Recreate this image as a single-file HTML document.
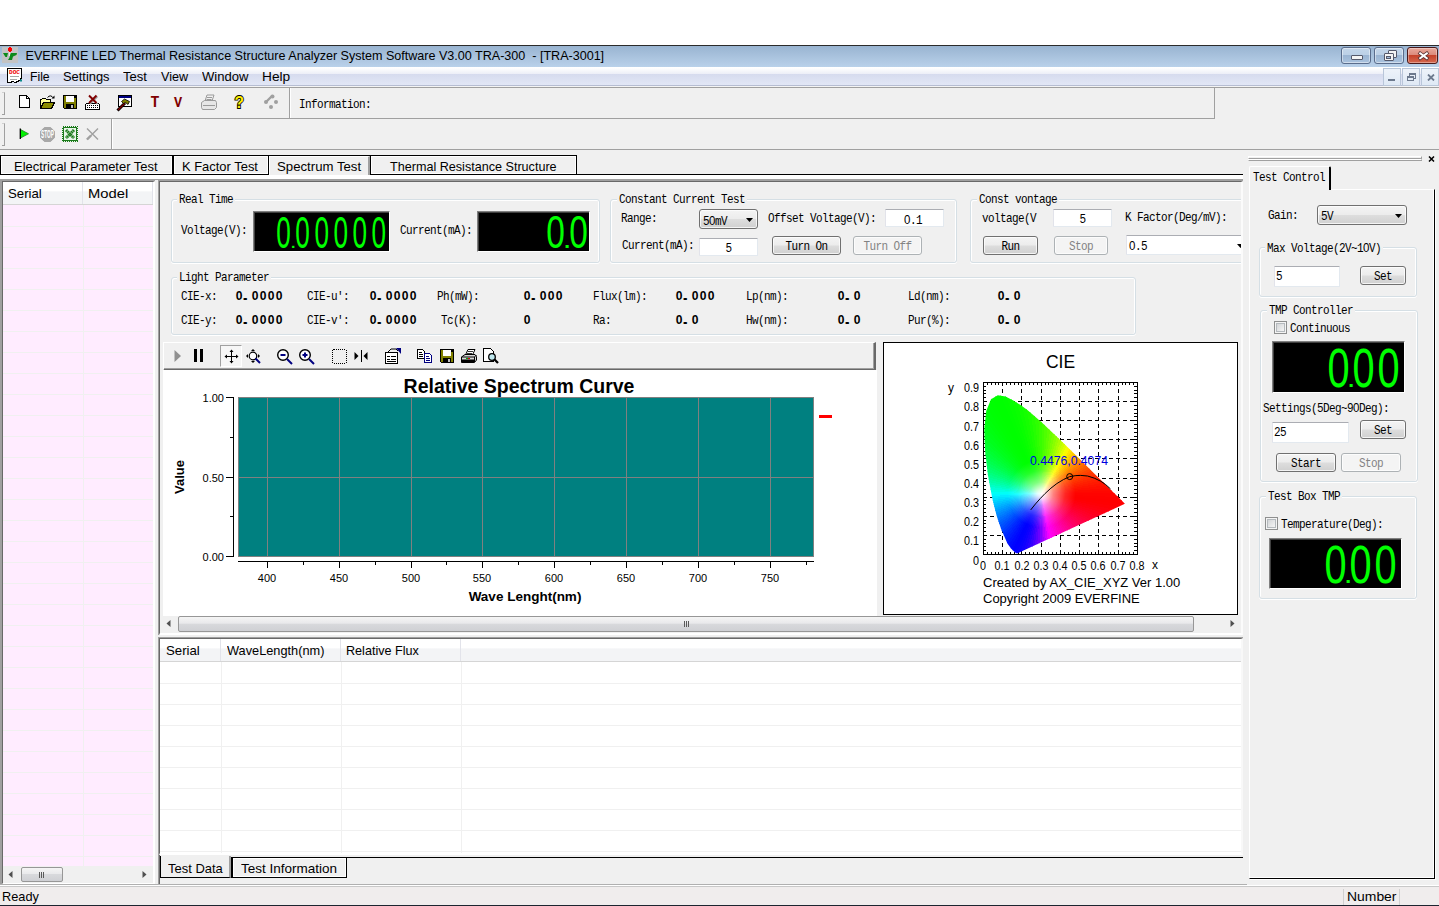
<!DOCTYPE html>
<html lang="en">
<head>
<meta charset="utf-8">
<title>EVERFINE LED Thermal Resistance Structure Analyzer System Software V3.00 TRA-300 - [TRA-3001]</title>
<style>
*{box-sizing:border-box;margin:0;padding:0}
html,body{width:1439px;height:906px;overflow:hidden;background:#fff}
body{position:relative;font-family:"Liberation Sans",sans-serif;font-size:12.6px;color:#000}
div,span,svg,b,i{position:absolute;display:block}
#win{left:0;top:0;width:1439px;height:906px;overflow:hidden}
#bg{left:0;top:45px;width:1439px;height:861px;background:#f0f0f0}
.ui{font-family:"Liberation Sans",sans-serif;font-size:12.6px;white-space:pre;line-height:16px;height:16px}
.ss{font-family:"Liberation Mono",monospace;font-size:11px;letter-spacing:-0.6px;white-space:pre;line-height:14px;height:14px;color:#000;transform:translateY(.5px) scaleY(1.1);transform-origin:0 50%}
.sb{font-family:"Liberation Sans",sans-serif;font-size:13px;white-space:nowrap;line-height:16px;height:16px;font-weight:bold;color:#000}
.sb em{display:inline-block;width:8px;text-align:center;font-style:normal;transform:scaleX(.93)}
.sb em.d{text-align:left;transform:scaleX(1.8);transform-origin:0 50%;margin-left:-1.5px;margin-right:1.5px}
.ar{font-family:"Liberation Sans",sans-serif;white-space:pre;color:#000}
#title{left:0;top:45px;width:1439px;height:22px;border-top:1px solid #2b2b2b;background:linear-gradient(#99b4d1,#b9d1ea)}
#menu{left:0;top:67px;width:1439px;height:20px;background:linear-gradient(#fff 0,#fff 5%,#eceef7 35%,#d6dbee 35%,#e2e7f6 90%,#b6bdd2 90%,#b6bdd2 95%,#f4f4f4 95%)}
.gb{border:1px solid #d5dfe5;border-radius:3px;box-shadow:inset 1px 1px 0 #fff,inset -1px 0 0 #fff,0 1px 0 #fff}
.gl{background:#f0f0f0;padding:0 2px 0 2px}
.btn{border:1px solid #707070;border-radius:3px;background:linear-gradient(#f4f4f4 0,#ececec 48%,#dddddd 52%,#d0d0d0 100%);box-shadow:inset 0 0 0 1px rgba(255,255,255,.75)}
.btn.dis{border-color:#adb2b5;background:#f4f4f4;box-shadow:inset 0 0 0 1px #fcfcfc}
.btn>span{left:0;right:0;text-align:center}
.btn.dis>span{color:#838383}
.ed{background:#fff;border:1px solid #e3e9ef;border-top-color:#abadb3;border-left-color:#e2e3ea;border-radius:1px}
.lcd{background:#000;border:1px solid #808080;border-right-color:#fff;border-bottom-color:#fff;box-shadow:inset 1px 1px 0 #404040}
.seg{font-family:"Liberation Sans",sans-serif;color:#0f0;white-space:nowrap;transform-origin:0 0;line-height:1}
.seg em{display:inline-block;font-style:normal;text-align:center}
.seg u{display:inline-block;width:0;text-decoration:none;position:relative}
.hl{height:1px}
.vl{width:1px}
.tab{border:1px solid #000;background:#f0f0f0;box-shadow:inset 0 0 0 1px #fff}
.tab.sel{box-shadow:none;border:0;border-left:1px solid #fff;border-top:1px solid #fff;border-right:2px solid #a0a0a0;background:#f0f0f0}
.cap{border:1px solid #5a6d8c;border-radius:3px;background:linear-gradient(#c3d6ea 0,#bcd0e6 45%,#9bb5d3 50%,#aac3de 100%);box-shadow:inset 0 0 0 1px rgba(255,255,255,.45)}
.cap.close{border-color:#4a1a1a;background:linear-gradient(#e9a99b 0,#dc8b7c 45%,#c5432b 50%,#d5684f 100%);box-shadow:inset 0 0 0 1px rgba(255,255,255,.35)}
.mdi{width:18px;height:18px;border:1px solid #b9c6d9;background:linear-gradient(#eef3fa,#dfe9f5)}
.cb{width:13px;height:13px;border:1px solid #8e8f8f;background:linear-gradient(135deg,#c9cccf 0,#f4f4f4 80%);box-shadow:inset 0 0 0 1px #f4f4f4,inset 0 0 0 2px #b4b9bd}
.ss em.z{font-family:"Liberation Sans",sans-serif;font-style:normal;display:inline-block;width:6px;text-align:center;letter-spacing:0;font-size:11.5px;line-height:14px}
</style>
</head>
<body>
<div id="win">
<div id="bg"></div>
<!-- title bar -->
<div id="title">
 <svg style="left:2px;top:1px;width:16px;height:16px" viewBox="0 0 16 16" shape-rendering="crispEdges">
  <rect x="0" y="0" width="16" height="16" fill="#c3c3c3"/>
  <rect x="6" y="1" width="4" height="3" fill="#f00"/><rect x="7" y="0" width="2" height="5" fill="#f00"/>
  <polygon points="1,6 6,6 5,10 3.5,10" fill="#0a8a1a" shape-rendering="auto"/>
  <polygon points="9,6 15,6 14.5,8 11,9.5 10,13 6,13 7.5,10.5 8,8" fill="#0a8a1a" shape-rendering="auto"/>
  <rect x="7" y="5" width="1" height="4" fill="#e8e8e8"/>
 </svg>
 <span class="ui" style="left:25.5px;top:2px;letter-spacing:-0.02px">EVERFINE LED Thermal Resistance Structure Analyzer System Software V3.00 TRA-300  - [TRA-3001]</span>
 <div class="cap" style="left:1341px;top:1px;width:30px;height:17px"><i style="left:9px;top:7px;width:12px;height:5px;background:#f4f4f4;border:1px solid #55596b;border-radius:1px"></i></div>
 <div class="cap" style="left:1374px;top:1px;width:30px;height:17px">
  <i style="left:13px;top:2px;width:9px;height:8px;background:#f4f4f4;border:1px solid #55596b;border-radius:1px"></i>
  <i style="left:9px;top:5px;width:10px;height:8px;background:#f4f4f4;border:1px solid #55596b;border-radius:1px"></i>
  <i style="left:11px;top:8px;width:5px;height:3px;background:#9fb9d8;border:1px solid #55596b"></i>
 </div>
 <div class="cap close" style="left:1407px;top:1px;width:31px;height:17px">
  <svg style="left:9px;top:3px;width:13px;height:10px" viewBox="0 0 13 10"><path d="M3.200 2.400 L9.800 7.200 M9.800 2.400 L3.200 7.200" stroke="#5a3535" stroke-width="3.600" stroke-linecap="square"/><path d="M3.200 2.400 L9.800 7.200 M9.800 2.400 L3.200 7.200" stroke="#fff" stroke-width="2" stroke-linecap="square"/></svg>
 </div>
</div>
<!-- menu bar -->
<div id="menu">
 <svg style="left:6px;top:0px;width:17px;height:17px" viewBox="0 0 17 17">
  <path d="M1.500 1.500 h14 v10 h-1.500 v1.500 h-2 v1.500 h-1.500 v1 h-2 l-1 -1 h-1.500 l-1 1 h-2.500 l-1 -0.500 z" fill="#fff" stroke="#000" stroke-width="1" shape-rendering="crispEdges"/>
  <text x="3" y="7.300" font-family="Liberation Mono,monospace" font-size="5.800" font-weight="bold" fill="#f00000" textLength="11" lengthAdjust="spacingAndGlyphs">DOC</text>
  <path d="M4 9.500 h9 M4 12.500 h7" stroke="#a8a8a8" stroke-width="1" shape-rendering="crispEdges"/>
  <rect x="14" y="12.500" width="2" height="2" fill="#0a8a8a"/>
 </svg>
 <span class="ui" style="left:29.5px;top:2px;transform:scaleX(0.968);transform-origin:0 0">File</span>
 <span class="ui" style="left:62.5px;top:2px;transform:scaleX(1.023);transform-origin:0 0">Settings</span>
 <span class="ui" style="left:123px;top:2px;transform:scaleX(1.035);transform-origin:0 0">Test</span>
 <span class="ui" style="left:161px;top:2px">View</span>
 <span class="ui" style="left:202px;top:2px;transform:scaleX(1.038);transform-origin:0 0">Window</span>
 <span class="ui" style="left:262.3px;top:2px;transform:scaleX(1.088);transform-origin:0 0">Help</span>
 <div class="mdi" style="left:1383px;top:1px"><i style="left:4px;top:10px;width:7px;height:2px;background:#6d7a8e"></i></div>
 <div class="mdi" style="left:1402px;top:1px"><i style="left:6px;top:4px;width:7px;height:6px;border:1px solid #6d7a8e;border-top-width:2px"></i><i style="left:4px;top:7px;width:7px;height:5px;border:1px solid #6d7a8e;border-top-width:2px;background:#e3ecf7"></i></div>
 <div class="mdi" style="left:1421px;top:1px"><svg style="left:5px;top:5px;width:8px;height:7px" viewBox="0 0 8 7"><path d="M1 0.500 L7 6.500 M7 0.500 L1 6.500" stroke="#6d7a8e" stroke-width="1.800"/></svg></div>
</div>
<div class="hl" style="left:0;top:87px;width:1439px;background:#a0a0a0"></div>
<!-- toolbar 1 -->
<div id="tb1" style="left:0;top:88px;width:1215px;height:31px;border-right:1px solid #a0a0a0;border-bottom:1px solid #a0a0a0">
 <i style="left:2px;top:4px;width:3px;height:23px;border:1px solid #a0a0a0;border-left:0;border-top-color:#d0d0d0"></i>
 <i style="left:289px;top:0;width:2px;height:30px;border-left:1px solid #a0a0a0;border-right:1px solid #fff"></i>
 <!-- new -->
 <svg style="left:18px;top:7px;width:16px;height:16px" viewBox="0 0 16 16" shape-rendering="crispEdges"><path d="M1.5 0.5 h7 l3 3 v9 h-10 z" fill="#fff" stroke="#000"/><path d="M8.5 0.5 v3 h3" fill="none" stroke="#000"/></svg>
 <!-- open -->
 <svg style="left:39px;top:6px;width:17px;height:17px" viewBox="0 0 17 17" shape-rendering="crispEdges"><path d="M8.500 3.500 q3 -3.500 6 0.500" fill="none" stroke="#000" shape-rendering="auto"/><path d="M12.500 4.500 h3 v-3 z" fill="#000" shape-rendering="auto"/><path d="M1.5 14.5 v-9 h1 l1 -1 h3 l1 1 h4 v2" fill="#ffff9c" stroke="#000"/><path d="M1.5 14.5 l3 -6 h11 l-3 6 z" fill="#8a8a00" stroke="#000"/></svg>
 <!-- save -->
 <svg style="left:63px;top:7px;width:14px;height:14px" viewBox="0 0 14 14" shape-rendering="crispEdges"><path d="M0.5 0.5 h13 v13 h-12 l-1 -1 z" fill="#808000" stroke="#000"/><rect x="3" y="1" width="8" height="6" fill="#fff"/><rect x="3" y="9" width="8" height="4" fill="#000"/><rect x="8" y="10" width="2" height="3" fill="#c0c0c0"/><rect x="11" y="1" width="2" height="2" fill="#000"/></svg>
 <!-- delete -->
 <svg style="left:84px;top:5px;width:17px;height:18px" viewBox="0 0 17 18" shape-rendering="crispEdges"><path d="M2.5 10.5 h12 l1 1 v5 h-14 v-5 z" fill="#fff" stroke="#000"/><path d="M3 12.5 h11 M3 14.5 h11" stroke="#000" stroke-dasharray="1 1"/><path d="M6 3.5 L13.500 11 M13.500 3.500 L6 11" stroke="#9a9a9a" stroke-width="1.6" shape-rendering="auto"/><path d="M5 2.5 L12.500 10 M12.500 2.500 L5 10" stroke="#800000" stroke-width="1.900" shape-rendering="auto"/></svg>
 <!-- hammer -->
 <svg style="left:116px;top:6px;width:17px;height:18px" viewBox="0 0 17 18" shape-rendering="crispEdges"><rect x="2.5" y="1.5" width="13" height="11" fill="#fff" stroke="#000"/><rect x="3" y="2" width="12" height="2" fill="#000080"/><path d="M1.5 16.5 L9 9" stroke="#000" stroke-width="3" shape-rendering="auto"/><path d="M2 16 L9 9" stroke="#800000" stroke-width="1.2" shape-rendering="auto"/><path d="M5.500 7.500 l3 -2.500 l5 2.500 l-1.500 3 l-2.500 -2 l-2 1 z" fill="#808000" stroke="#000" stroke-width=".8" shape-rendering="auto"/></svg>
 <span class="tic" style="left:149px;top:5px;width:12px;height:20px;font:bold 16.5px/20px 'Liberation Mono',monospace;color:#800000;text-align:center;transform:scaleX(.9)">T</span>
 <span class="tic" style="left:172px;top:6px;width:12px;height:20px;font:bold 15px/20px 'Liberation Mono',monospace;color:#800000;text-align:center;transform:scaleX(.9)">V</span>
 <!-- print (disabled) -->
 <svg style="left:200px;top:6px;width:18px;height:17px" viewBox="0 0 18 17"><path d="M5 7 l2 -6 h7 l-2 6" fill="#f0f0f0" stroke="#9a9a9a"/><path d="M1.5 8.5 l3 -2 h11 l1 2 v5 l-2 2 h-12 l-1 -2 z" fill="#e6e6e6" stroke="#9a9a9a"/><path d="M3 11.5 h12 M7 3.5 h5 M6.500 5.500 h5" stroke="#9a9a9a"/></svg>
 <!-- help -->
 <svg style="left:232px;top:4px;width:15px;height:20px" viewBox="0 0 15 20"><text x="2.6" y="16" font-family="Liberation Sans,sans-serif" font-weight="bold" font-size="17" fill="#ffee00" stroke="#000" stroke-width="1.8" paint-order="stroke" textLength="9.5" lengthAdjust="spacingAndGlyphs">?</text></svg>
 <!-- dots (disabled) -->
 <svg style="left:263px;top:6px;width:16px;height:17px" viewBox="0 0 16 17"><path d="M3 8 L9 2" stroke="#a0a0a0" stroke-width="2.4" stroke-linecap="round"/><circle cx="3" cy="8" r="2" fill="#a0a0a0"/><circle cx="9.5" cy="2.500" r="2" fill="#a0a0a0"/><circle cx="13" cy="8" r="2" fill="#a0a0a0"/><circle cx="8" cy="13" r="2" fill="#a0a0a0"/></svg>
 <span class="ss" style="left:299px;top:9px">Information:</span>
</div>
<!-- toolbar 2 -->
<div id="tb2" style="left:0;top:119px;width:1439px;height:31px;border-bottom:1px solid #a0a0a0">
 <i style="left:2px;top:4px;width:3px;height:23px;border:1px solid #a0a0a0;border-left:0;border-top-color:#d0d0d0"></i>
 <i style="left:111px;top:0;width:2px;height:30px;border-left:1px solid #a0a0a0;border-right:1px solid #fff"></i>
 <svg style="left:19px;top:9px;width:12px;height:12px" viewBox="0 0 12 12"><path d="M1.5 1.5 L9.5 5.8 L1.5 10 z" fill="#00f000" stroke="#208020" stroke-width="0.8"/><path d="M1.3 0.5 V11" stroke="#000" stroke-width="1.3"/></svg>
 <svg style="left:40px;top:8px;width:15px;height:15px" viewBox="0 0 17 17"><polygon points="5,0.500 12,0.500 16.500,5 16.500,12 12,16.500 5,16.500 0.500,12 0.500,5" fill="#a8a8a8" stroke="#a0a0a0"/><text x="1.200" y="12.600" font-family="Liberation Sans,sans-serif" font-weight="bold" font-size="11.500" fill="#fff" textLength="14.600" lengthAdjust="spacingAndGlyphs">STOP</text></svg>
 <svg style="left:62px;top:7px;width:16px;height:16px" viewBox="0 0 16 16" shape-rendering="crispEdges"><rect x="0.5" y="0.5" width="15" height="15" fill="#e8f4e8" stroke="#1a7a1a" stroke-dasharray="1 1"/><rect x="1.5" y="1.5" width="13" height="13" fill="none" stroke="#1a7a1a"/><path d="M4 4 L12 12 M12 4 L4 12" stroke="#1a7a1a" stroke-width="3" stroke-dasharray="1.6 0.5" shape-rendering="auto"/></svg>
 <svg style="left:85px;top:8px;width:15px;height:14px" viewBox="0 0 15 14"><path d="M2 1.5 L13 12.5 M13 1.5 L2 12.5" stroke="#a0a0a0" stroke-width="1.4"/><path d="M2 12.5 L6 8.5" stroke="#a0a0a0" stroke-width="2.4"/></svg>
</div>
<!-- main tab strip -->
<div style="left:0;top:174px;width:1243px;height:1px;background:#000"></div>
<div style="left:0;top:175px;width:1243px;height:4px;background:#fff"></div>
<div style="left:0;top:155px;width:577px;height:1px;background:#000"></div>
<div class="tab" style="left:0;top:155px;width:173px;height:20px"><span class="ui" style="left:13.3px;top:3px;transform:scaleX(1.027);transform-origin:0 0">Electrical Parameter Test</span></div>
<div class="tab" style="left:173px;top:155px;width:96px;height:20px"><span class="ui" style="left:7.8px;top:3px;transform:scaleX(1.027);transform-origin:0 0">K Factor Test</span></div>
<div class="tab sel" style="left:269px;top:156px;width:101px;height:19px"><span class="ui" style="left:7.3px;top:2px;transform:scaleX(1.048);transform-origin:0 0">Spectrum Test</span></div>
<div class="tab" style="left:370px;top:155px;width:207px;height:20px"><span class="ui" style="left:19px;top:3px">Thermal Resistance Structure</span></div>
<!-- left list panel -->
<div class="hl" style="left:0;top:179px;width:1243px;background:#a0a0a0"></div>
<div style="left:0;top:180px;width:155px;height:704px;border-left:2px solid #a0a0a0;border-top:1px solid #a0a0a0"></div>
<div id="left" style="left:2px;top:181px;width:153px;height:703px;background:#ffecff;border-left:1px solid #696969;border-top:1px solid #696969;border-right:2px solid #fff;border-bottom:1px solid #fff">
 <div style="left:0;top:0;width:150px;height:23px;background:linear-gradient(#fff 0,#fff 40%,#f3f4f6 45%,#f3f4f6 100%);border-bottom:1px solid #d5d5d5"></div>
 <i class="vl" style="left:79px;top:0;height:22px;background:#e2e3ea"></i>
 <i class="vl" style="left:149px;top:0;height:22px;background:#e2e3ea"></i>
 <span class="ui" style="left:5.2px;top:4px;transform:scaleX(1.050);transform-origin:0 0">Serial</span>
 <span class="ui" style="left:85.2px;top:4px;transform:scaleX(1.172);transform-origin:0 0">Model</span>
 <div style="left:0;top:24px;width:150px;height:660px;background-size:150px 21px;background-image:linear-gradient(#ffecff 0,#ffecff 20px,#f0f0f0 20px,#f0f0f0 21px)"></div>
 <i class="vl" style="left:80px;top:23px;height:661px;background:#f0f0f0"></i>
 <div style="left:0;top:684px;width:150px;height:17px;background:#f0f0f0">
  <svg style="left:5px;top:5px;width:5px;height:7px" viewBox="0 0 5 7"><path d="M4.5 0 L0.5 3.5 L4.5 7 z" fill="#505050"/></svg>
  <div style="left:18px;top:1px;width:42px;height:15px;border:1px solid #979797;border-radius:2px;background:linear-gradient(#f5f5f5 0,#e9e9eb 45%,#d8d9dc 50%,#cfd0d4 100%)"><i style="left:17px;top:4px;width:1px;height:6px;background:#5a5a5a"></i><i style="left:19px;top:4px;width:1px;height:6px;background:#5a5a5a"></i><i style="left:21px;top:4px;width:1px;height:6px;background:#5a5a5a"></i></div>
  <svg style="left:139px;top:5px;width:5px;height:7px" viewBox="0 0 5 7"><path d="M0.5 0 L4.5 3.5 L0.5 7 z" fill="#505050"/></svg>
 </div>
</div>
<!-- main panel frame -->
<div style="left:158px;top:180px;width:1085px;height:455px;border-left:1px solid #a0a0a0;border-top:1px solid #a0a0a0"></div>
<div id="main" style="left:159px;top:181px;width:1084px;height:454px;background:#f0f0f0;border-top:1px solid #696969;border-left:1px solid #696969;border-right:2px solid #fbfbfb;border-bottom:2px solid #fff;overflow:hidden">
<div id="mc" style="left:-160px;top:-182px;width:1439px;height:906px">
 <!-- Real Time -->
 <div class="gb" style="left:171px;top:199px;width:429px;height:64px"></div>
 <span class="ss gl" style="left:177px;top:192px">Real Time</span>
 <span class="ss" style="left:181px;top:223px">Voltage(V):</span>
 <div class="lcd" style="left:253px;top:211px;width:137px;height:41px"><span class="seg" style="left:20.3px;top:-0.8px;font-size:43.8px;transform:scale(0.597,1)"><em style="width:31.94px">0</em><u style="font-size:20.6px;left:-5.4px;transform:scaleX(1.88);transform-origin:0 0">.</u><em style="width:31.94px">0</em><em style="width:31.94px">0</em><em style="width:31.94px">0</em><em style="width:31.94px">0</em><em style="width:31.94px">0</em></span></div>
 <span class="ss" style="left:400px;top:223px">Current(mA):</span>
 <div class="lcd" style="left:477px;top:211px;width:113px;height:41px"><span class="seg" style="left:66.3px;top:-3.3px;font-size:46.2px;transform:scale(0.724,1)"><em style="width:31.77px">0</em><u style="font-size:28.0px;left:-6.1px;transform:scaleX(1.55);transform-origin:0 0">.</u><em style="width:31.77px">0</em></span></div>
 <!-- Constant Current Test -->
 <div class="gb" style="left:610px;top:199px;width:347px;height:64px"></div>
 <span class="ss gl" style="left:617px;top:192px">Constant Current Test</span>
 <span class="ss" style="left:621px;top:211px">Range:</span>
 <div class="btn" style="left:699px;top:209px;width:59px;height:20px"><span class="ss" style="left:3px;top:3px;text-align:left">5<em class="z">0</em>mV</span><svg style="left:46px;top:8px;width:7px;height:4px" viewBox="0 0 7 4"><path d="M0 0 h7 l-3.500 4 z" fill="#000"/></svg></div>
 <span class="ss" style="left:768px;top:211px">Offset Voltage(V):</span>
 <div class="ed" style="left:885px;top:209px;width:59px;height:18px"><span class="ss" style="left:-1.5px;width:57px;text-align:center;top:2px"><em class="z">0</em>.1</span></div>
 <span class="ss" style="left:622px;top:238px">Current(mA):</span>
 <div class="ed" style="left:699px;top:238px;width:59px;height:18px"><span class="ss" style="left:0;width:57px;text-align:center;top:2px">5</span></div>
 <div class="btn" style="left:772px;top:236px;width:69px;height:19px"><span class="ss" style="top:2px">Turn On</span></div>
 <div class="btn dis" style="left:853px;top:236px;width:69px;height:19px"><span class="ss" style="top:2px">Turn Off</span></div>
 <!-- Const vontage -->
 <div class="gb" style="left:970px;top:199px;width:290px;height:64px"></div>
 <span class="ss gl" style="left:977px;top:192px">Const vontage</span>
 <span class="ss" style="left:982px;top:211px">voltage(V</span>
 <div class="ed" style="left:1053px;top:209px;width:59px;height:18px"><span class="ss" style="left:0;width:57px;text-align:center;top:2px">5</span></div>
 <span class="ss" style="left:1125px;top:210px">K Factor(Deg/mV):</span>
 <div class="btn" style="left:983px;top:236px;width:55px;height:19px"><span class="ss" style="top:2px">Run</span></div>
 <div class="btn dis" style="left:1054px;top:236px;width:54px;height:19px"><span class="ss" style="top:2px">Stop</span></div>
 <div class="ed" style="left:1126px;top:235px;width:130px;height:20px"><span class="ss" style="left:2px;top:2px"><em class="z">0</em>.5</span><svg style="left:109.5px;top:8px;width:7px;height:4px" viewBox="0 0 7 4"><path d="M0 0 h7 l-3.500 4 z" fill="#000"/></svg></div>
 <!-- Light Parameter -->
 <div class="gb" style="left:171px;top:277px;width:965px;height:58px"></div>
 <span class="ss gl" style="left:177px;top:270px">Light Parameter</span>
 <span class="ss" style="left:181px;top:289px">CIE-x:</span><span class="sb" style="left:235px;top:288px"><em>0</em><em class="d">.</em><em>0</em><em>0</em><em>0</em><em>0</em></span>
 <span class="ss" style="left:181px;top:313px">CIE-y:</span><span class="sb" style="left:235px;top:312px"><em>0</em><em class="d">.</em><em>0</em><em>0</em><em>0</em><em>0</em></span>
 <span class="ss" style="left:307px;top:289px">CIE-u':</span><span class="sb" style="left:369px;top:288px"><em>0</em><em class="d">.</em><em>0</em><em>0</em><em>0</em><em>0</em></span>
 <span class="ss" style="left:307px;top:313px">CIE-v':</span><span class="sb" style="left:369px;top:312px"><em>0</em><em class="d">.</em><em>0</em><em>0</em><em>0</em><em>0</em></span>
 <span class="ss" style="left:437px;top:289px">Ph(mW):</span><span class="sb" style="left:523px;top:288px"><em>0</em><em class="d">.</em><em>0</em><em>0</em><em>0</em></span>
 <span class="ss" style="left:441px;top:313px">Tc(K):</span><span class="sb" style="left:523px;top:312px"><em>0</em></span>
 <span class="ss" style="left:593px;top:289px">Flux(lm):</span><span class="sb" style="left:675px;top:288px"><em>0</em><em class="d">.</em><em>0</em><em>0</em><em>0</em></span>
 <span class="ss" style="left:593px;top:313px">Ra:</span><span class="sb" style="left:675px;top:312px"><em>0</em><em class="d">.</em><em>0</em></span>
 <span class="ss" style="left:746px;top:289px">Lp(nm):</span><span class="sb" style="left:837px;top:288px"><em>0</em><em class="d">.</em><em>0</em></span>
 <span class="ss" style="left:746px;top:313px">Hw(nm):</span><span class="sb" style="left:837px;top:312px"><em>0</em><em class="d">.</em><em>0</em></span>
 <span class="ss" style="left:908px;top:289px">Ld(nm):</span><span class="sb" style="left:997px;top:288px"><em>0</em><em class="d">.</em><em>0</em></span>
 <span class="ss" style="left:908px;top:313px">Pur(%):</span><span class="sb" style="left:997px;top:312px"><em>0</em><em class="d">.</em><em>0</em></span>
 <!-- chart toolbar -->
<div style="left:163px;top:342px;width:713px;height:29px;background:#f0f0f0;border:1px solid #fff;border-right:2px solid #696969;border-bottom:2px solid #696969;box-shadow:inset -1px -1px 0 #a0a0a0"></div>
<div id="ctb" style="left:163px;top:342px;width:713px;height:28px">
<svg style="left:11px;top:8px;width:8px;height:12px" viewBox="0 0 8 12"><path d="M0.5 0 L7 6 L0.5 12 z" fill="#909090"/></svg>
<i style="left:31px;top:7px;width:3px;height:13px;background:#000"></i><i style="left:37px;top:7px;width:3px;height:13px;background:#000"></i>
<i style="left:57px;top:3px;width:22px;height:22px;border:1px solid #a0a0a0;border-right-color:#fff;border-bottom-color:#fff;background:#f6f6f6"></i>
<svg style="left:61px;top:7px;width:15px;height:15px" viewBox="0 0 15 15" shape-rendering="crispEdges"><path d="M7.5 1 V14 M1 7.5 H14" stroke="#000"/><path d="M7.5 0.5 l-2 2.5 h4 z M7.5 14.5 l-2 -2.5 h4 z M0.5 7.5 l2.5 -2 v4 z M14.5 7.5 l-2.5 -2 v4 z" fill="#000" shape-rendering="auto"/></svg>
<svg style="left:82px;top:5px;width:18px;height:19px" viewBox="0 0 18 19"><circle cx="8" cy="9" r="3.8" fill="#fff" stroke="#000" stroke-width="1.2"/><path d="M10.5 11.5 L15 16" stroke="#000080" stroke-width="1.9"/><path d="M8 2 l-2 2 h4 z M1 9 l2 -2 v4 z M15 9 l-2 -2 v4 z M8 16 l-2 -2 h4 z" fill="#000"/></svg>
<svg style="left:113px;top:6px;width:18px;height:18px" viewBox="0 0 18 18"><circle cx="7" cy="7" r="5.3" fill="#fff" stroke="#000" stroke-width="1.4"/><path d="M11 11 L16 16" stroke="#000080" stroke-width="2"/><path d="M4.5 7 h5" stroke="#000080" stroke-width="2"/></svg>
<svg style="left:135px;top:6px;width:18px;height:18px" viewBox="0 0 18 18"><circle cx="7" cy="7" r="5.3" fill="#fff" stroke="#000" stroke-width="1.4"/><path d="M11 11 L16 16" stroke="#000080" stroke-width="2"/><path d="M4.5 7 h5 M7 4.5 v5" stroke="#000080" stroke-width="2"/></svg>
<svg style="left:168px;top:6px;width:17px;height:17px" viewBox="0 0 17 17" shape-rendering="crispEdges"><rect x="1.5" y="1.5" width="14" height="14" rx="1.5" fill="none" stroke="#000" stroke-dasharray="1 1"/></svg>
<svg style="left:191px;top:8px;width:14px;height:12px" viewBox="0 0 14 12"><path d="M7.5 0 V12" stroke="#000" stroke-width="1" shape-rendering="crispEdges"/><path d="M0.5 2 L4.5 6 L0.5 10 z M13.5 2 L9.5 6 L13.5 10 z" fill="#000"/></svg>
<svg style="left:221px;top:5px;width:18px;height:18px" viewBox="0 0 18 18" shape-rendering="crispEdges"><path d="M1.5 5.5 h12 v11 h-12 z" fill="#fff" stroke="#000"/><path d="M3 9.5 h3 M7 9.5 h5 M3 12.5 h3 M7 12.5 h5 M3 14.5 h9" stroke="#000"/><path d="M4 5 l3 -3 h5 l2 2" fill="#f0f0f0" stroke="#000" shape-rendering="auto"/><path d="M12 1 h5 v6 z" fill="#000080" shape-rendering="auto"/></svg>
<svg style="left:253px;top:6px;width:18px;height:16px" viewBox="0 0 18 16" shape-rendering="crispEdges"><path d="M1.5 1.5 h5 l2 2 v7 h-7 z" fill="#fff" stroke="#000"/><path d="M3 4.5 h3 M3 6.5 h4 M3 8.5 h4" stroke="#000"/><path d="M8.5 5.5 h5 l2 2 v7 h-7 z" fill="#fff" stroke="#000080"/><path d="M10 8.5 h3 M10 10.5 h4 M10 12.5 h4" stroke="#000080"/></svg>
<svg style="left:277px;top:7px;width:14px;height:14px" viewBox="0 0 14 14" shape-rendering="crispEdges"><path d="M0.5 0.5 h13 v13 h-12 l-1 -1 z" fill="#808000" stroke="#000"/><rect x="3" y="1" width="8" height="6" fill="#fff"/><rect x="3" y="9" width="8" height="4" fill="#000"/><rect x="8" y="10" width="2" height="3" fill="#c0c0c0"/><rect x="11" y="1" width="2" height="2" fill="#000"/></svg>
<svg style="left:297px;top:6px;width:18px;height:16px" viewBox="0 0 18 16"><path d="M5.5 7 l2.500 -5.500 h7 l-2.500 5.500 z" fill="#fff" stroke="#000"/><path d="M8 3.500 h5 M7 5.500 h5" stroke="#000" stroke-width=".8"/><path d="M1.500 9 l3.500 -2.500 h10 l1.500 2 v3.500 l-2 2.500 h-13 z" fill="#d8d8d8" stroke="#000"/><path d="M1.500 9 h13 l2 -2 M14.500 9 v5" stroke="#000" fill="none"/><rect x="2" y="11.500" width="12" height="2.500" fill="#000"/><rect x="6" y="10" width="2" height="1" fill="#0a0"/><rect x="8" y="10" width="2" height="1" fill="#d00"/></svg>
<svg style="left:319px;top:5px;width:18px;height:18px" viewBox="0 0 18 18"><path d="M1.5 1.5 h7 l3 3 v10 h-10 z" fill="#fff" stroke="#000" shape-rendering="crispEdges"/><circle cx="10" cy="10" r="3.3" fill="#bfe8ef" stroke="#000" stroke-width="1.3"/><path d="M12.5 12.5 L16 16" stroke="#000" stroke-width="2.3"/></svg>
</div>
<!-- chart -->
<div id="chart" style="left:163px;top:370px;width:714px;height:246px;background:#fff">
<span class="ar" style="left:0;width:712px;text-align:center;top:5px;font-size:19.5px;line-height:22px;font-weight:bold">Relative Spectrum Curve</span>
<div style="left:75px;top:27px;width:576px;height:160px;background:#008080;border:1px solid #808080"></div>
<i class="vl" style="left:104px;top:28px;height:158px;background:#808080"></i>
<i class="vl" style="left:176px;top:28px;height:158px;background:#808080"></i>
<i class="vl" style="left:248px;top:28px;height:158px;background:#808080"></i>
<i class="vl" style="left:319px;top:28px;height:158px;background:#808080"></i>
<i class="vl" style="left:391px;top:28px;height:158px;background:#808080"></i>
<i class="vl" style="left:463px;top:28px;height:158px;background:#808080"></i>
<i class="vl" style="left:535px;top:28px;height:158px;background:#808080"></i>
<i class="vl" style="left:607px;top:28px;height:158px;background:#808080"></i>
<i class="hl" style="left:76px;top:107px;width:574px;background:#808080"></i>
<i class="vl" style="left:70px;top:27px;height:160px;background:#000"></i>
<i class="hl" style="left:63px;top:27px;width:7px;background:#000"></i>
<i class="hl" style="left:67px;top:67px;width:3px;background:#000"></i>
<i class="hl" style="left:63px;top:107px;width:7px;background:#000"></i>
<i class="hl" style="left:67px;top:146px;width:3px;background:#000"></i>
<i class="hl" style="left:63px;top:186px;width:7px;background:#000"></i>
<span class="ar" style="left:31px;top:21px;width:30px;text-align:right;font-size:11px;line-height:14px">1.00</span>
<span class="ar" style="left:31px;top:101px;width:30px;text-align:right;font-size:11px;line-height:14px">0.50</span>
<span class="ar" style="left:31px;top:180px;width:30px;text-align:right;font-size:11px;line-height:14px">0.00</span>
<span class="ar" style="left:-3px;top:99px;width:40px;height:16px;text-align:center;font-size:13px;line-height:16px;font-weight:bold;transform:rotate(-90deg)">Value</span>
<i class="hl" style="left:75px;top:191px;width:576px;background:#000"></i>
<i class="vl" style="left:104px;top:192px;height:6px;background:#000"></i>
<span class="ar" style="left:84px;top:201px;width:40px;text-align:center;font-size:11px;line-height:14px">400</span>
<i class="vl" style="left:140px;top:192px;height:3px;background:#000"></i>
<i class="vl" style="left:176px;top:192px;height:6px;background:#000"></i>
<span class="ar" style="left:156px;top:201px;width:40px;text-align:center;font-size:11px;line-height:14px">450</span>
<i class="vl" style="left:212px;top:192px;height:3px;background:#000"></i>
<i class="vl" style="left:248px;top:192px;height:6px;background:#000"></i>
<span class="ar" style="left:228px;top:201px;width:40px;text-align:center;font-size:11px;line-height:14px">500</span>
<i class="vl" style="left:283px;top:192px;height:3px;background:#000"></i>
<i class="vl" style="left:319px;top:192px;height:6px;background:#000"></i>
<span class="ar" style="left:299px;top:201px;width:40px;text-align:center;font-size:11px;line-height:14px">550</span>
<i class="vl" style="left:355px;top:192px;height:3px;background:#000"></i>
<i class="vl" style="left:391px;top:192px;height:6px;background:#000"></i>
<span class="ar" style="left:371px;top:201px;width:40px;text-align:center;font-size:11px;line-height:14px">600</span>
<i class="vl" style="left:427px;top:192px;height:3px;background:#000"></i>
<i class="vl" style="left:463px;top:192px;height:6px;background:#000"></i>
<span class="ar" style="left:443px;top:201px;width:40px;text-align:center;font-size:11px;line-height:14px">650</span>
<i class="vl" style="left:499px;top:192px;height:3px;background:#000"></i>
<i class="vl" style="left:535px;top:192px;height:6px;background:#000"></i>
<span class="ar" style="left:515px;top:201px;width:40px;text-align:center;font-size:11px;line-height:14px">700</span>
<i class="vl" style="left:571px;top:192px;height:3px;background:#000"></i>
<i class="vl" style="left:607px;top:192px;height:6px;background:#000"></i>
<span class="ar" style="left:587px;top:201px;width:40px;text-align:center;font-size:11px;line-height:14px">750</span>
<i class="vl" style="left:643px;top:192px;height:3px;background:#000"></i>
<span class="ar" style="left:262px;top:219px;width:200px;text-align:center;font-size:13.5px;line-height:16px;font-weight:bold">Wave Lenght(nm)</span>
<i style="left:656px;top:45px;width:13px;height:3px;background:#f00"></i>
</div>
 <!-- CIE diagram -->
<div id="cie" style="left:883px;top:342px;width:355px;height:273px;background:#fff;border:1px solid #000">
<span class="ar" style="left:0;width:353px;text-align:center;top:9px;font-size:17.5px;line-height:20px">CIE</span>
<svg style="left:99px;top:39px;width:155px;height:173px;overflow:visible" viewBox="0 0 155 173">
<path d="M19.5 0 V172.0 M38.5 0 V172.0 M58.5 0 V172.0 M77.5 0 V172.0 M96.5 0 V172.0 M115.5 0 V172.0 M135.5 0 V172.0 M0 153.5 H154.0 M0 134.5 H154.0 M0 115.5 H154.0 M0 96.5 H154.0 M0 76.5 H154.0 M0 57.5 H154.0 M0 38.5 H154.0 M0 19.5 H154.0" stroke="#000" stroke-width="1" stroke-dasharray="4 3" fill="none" shape-rendering="crispEdges"/>
<path d="M0.5 0 v3 M0.5 172.0 v-2 M4.5 0 v3 M4.5 172.0 v-2 M8.5 0 v3 M8.5 172.0 v-2 M12.5 0 v3 M12.5 172.0 v-2 M15.5 0 v3 M15.5 172.0 v-2 M19.5 0 v3 M19.5 172.0 v-2 M23.5 0 v3 M23.5 172.0 v-2 M27.5 0 v3 M27.5 172.0 v-2 M31.5 0 v3 M31.5 172.0 v-2 M35.5 0 v3 M35.5 172.0 v-2 M38.5 0 v3 M38.5 172.0 v-2 M42.5 0 v3 M42.5 172.0 v-2 M46.5 0 v3 M46.5 172.0 v-2 M50.5 0 v3 M50.5 172.0 v-2 M54.5 0 v3 M54.5 172.0 v-2 M58.5 0 v3 M58.5 172.0 v-2 M62.5 0 v3 M62.5 172.0 v-2 M65.5 0 v3 M65.5 172.0 v-2 M69.5 0 v3 M69.5 172.0 v-2 M73.5 0 v3 M73.5 172.0 v-2 M77.5 0 v3 M77.5 172.0 v-2 M81.5 0 v3 M81.5 172.0 v-2 M85.5 0 v3 M85.5 172.0 v-2 M89.5 0 v3 M89.5 172.0 v-2 M92.5 0 v3 M92.5 172.0 v-2 M96.5 0 v3 M96.5 172.0 v-2 M100.5 0 v3 M100.5 172.0 v-2 M104.5 0 v3 M104.5 172.0 v-2 M108.5 0 v3 M108.5 172.0 v-2 M112.5 0 v3 M112.5 172.0 v-2 M115.5 0 v3 M115.5 172.0 v-2 M119.5 0 v3 M119.5 172.0 v-2 M123.5 0 v3 M123.5 172.0 v-2 M127.5 0 v3 M127.5 172.0 v-2 M131.5 0 v3 M131.5 172.0 v-2 M135.5 0 v3 M135.5 172.0 v-2 M139.5 0 v3 M139.5 172.0 v-2 M142.5 0 v3 M142.5 172.0 v-2 M146.5 0 v3 M146.5 172.0 v-2 M150.5 0 v3 M150.5 172.0 v-2 M154.5 0 v3 M154.5 172.0 v-2 M0 172.5 h3 M154.0 172.5 h-3 M0 168.5 h3 M154.0 168.5 h-3 M0 164.5 h3 M154.0 164.5 h-3 M0 161.5 h3 M154.0 161.5 h-3 M0 157.5 h3 M154.0 157.5 h-3 M0 153.5 h3 M154.0 153.5 h-3 M0 149.5 h3 M154.0 149.5 h-3 M0 145.5 h3 M154.0 145.5 h-3 M0 141.5 h3 M154.0 141.5 h-3 M0 138.5 h3 M154.0 138.5 h-3 M0 134.5 h3 M154.0 134.5 h-3 M0 130.5 h3 M154.0 130.5 h-3 M0 126.5 h3 M154.0 126.5 h-3 M0 122.5 h3 M154.0 122.5 h-3 M0 118.5 h3 M154.0 118.5 h-3 M0 115.5 h3 M154.0 115.5 h-3 M0 111.5 h3 M154.0 111.5 h-3 M0 107.5 h3 M154.0 107.5 h-3 M0 103.5 h3 M154.0 103.5 h-3 M0 99.5 h3 M154.0 99.5 h-3 M0 96.5 h3 M154.0 96.5 h-3 M0 92.5 h3 M154.0 92.5 h-3 M0 88.5 h3 M154.0 88.5 h-3 M0 84.5 h3 M154.0 84.5 h-3 M0 80.5 h3 M154.0 80.5 h-3 M0 76.5 h3 M154.0 76.5 h-3 M0 73.5 h3 M154.0 73.5 h-3 M0 69.5 h3 M154.0 69.5 h-3 M0 65.5 h3 M154.0 65.5 h-3 M0 61.5 h3 M154.0 61.5 h-3 M0 57.5 h3 M154.0 57.5 h-3 M0 54.5 h3 M154.0 54.5 h-3 M0 50.5 h3 M154.0 50.5 h-3 M0 46.5 h3 M154.0 46.5 h-3 M0 42.5 h3 M154.0 42.5 h-3 M0 38.5 h3 M154.0 38.5 h-3 M0 34.5 h3 M154.0 34.5 h-3 M0 31.5 h3 M154.0 31.5 h-3 M0 27.5 h3 M154.0 27.5 h-3 M0 23.5 h3 M154.0 23.5 h-3 M0 19.5 h3 M154.0 19.5 h-3 M0 15.5 h3 M154.0 15.5 h-3 M0 11.5 h3 M154.0 11.5 h-3 M0 8.5 h3 M154.0 8.5 h-3 M0 4.5 h3 M154.0 4.5 h-3 M0 0.5 h3 M154.0 0.5 h-3" stroke="#000" stroke-width="1" fill="none" shape-rendering="crispEdges"/>
<defs><clipPath id="hs"><polygon points="34.0,171.5 32.1,170.4 28.2,166.8 24.4,161.5 18.1,147.1 13.7,134.1 9.2,116.1 5.0,93.6 2.1,69.6 1.3,47.4 3.2,29.1 8.0,17.3 14.8,13.2 22.5,14.6 30.3,18.5 37.6,23.1 44.7,28.3 58.6,40.2 72.3,53.2 86.0,66.5 99.2,79.5 111.2,91.4 121.2,101.3 128.7,108.7 133.6,113.6 138.9,118.8 141.9,121.8"/></clipPath>
<radialGradient id="wg" cx="58.6" cy="111.7" r="34" gradientUnits="userSpaceOnUse"><stop offset="0" stop-color="#fff" stop-opacity="1"/><stop offset=".12" stop-color="#fff" stop-opacity=".88"/><stop offset=".35" stop-color="#fff" stop-opacity=".5"/><stop offset=".7" stop-color="#fff" stop-opacity=".14"/><stop offset="1" stop-color="#fff" stop-opacity="0"/></radialGradient></defs>
<g clip-path="url(#hs)" shape-rendering="crispEdges">
<polygon points="58.6,111.7 318.6,111.7 318.3,98.1" fill="#ff0600"/>
<polygon points="58.6,111.7 318.4,100.4 317.4,86.8" fill="#ff0900"/>
<polygon points="58.6,111.7 317.6,89.1 316.1,75.5" fill="#ff0e00"/>
<polygon points="58.6,111.7 316.4,77.8 314.3,64.3" fill="#ff1300"/>
<polygon points="58.6,111.7 314.7,66.6 312.0,53.2" fill="#ff1900"/>
<polygon points="58.6,111.7 312.5,55.5 309.2,42.2" fill="#ff1f00"/>
<polygon points="58.6,111.7 309.8,44.4 305.9,31.4" fill="#ff2600"/>
<polygon points="58.6,111.7 306.6,33.5 302.2,20.7" fill="#ff2e00"/>
<polygon points="58.6,111.7 303.0,22.8 298.0,10.1" fill="#ff3600"/>
<polygon points="58.6,111.7 298.8,12.2 293.3,-0.2" fill="#ff3f00"/>
<polygon points="58.6,111.7 294.3,1.8 288.2,-10.3" fill="#ff4800"/>
<polygon points="58.6,111.7 289.3,-8.3 282.7,-20.2" fill="#ff5200"/>
<polygon points="58.6,111.7 283.8,-18.3 276.7,-29.9" fill="#ff5d00"/>
<polygon points="58.6,111.7 277.9,-28.0 270.3,-39.3" fill="#ff6800"/>
<polygon points="58.6,111.7 271.6,-37.4 263.5,-48.3" fill="#ff7400"/>
<polygon points="58.6,111.7 264.9,-46.6 256.3,-57.1" fill="#ff8000"/>
<polygon points="58.6,111.7 257.8,-55.4 248.8,-65.6" fill="#ff8d00"/>
<polygon points="58.6,111.7 250.3,-63.9 240.9,-73.7" fill="#ff9b00"/>
<polygon points="58.6,111.7 242.5,-72.1 232.6,-81.5" fill="#ffa900"/>
<polygon points="58.6,111.7 234.3,-80.0 224.0,-88.9" fill="#ffb700"/>
<polygon points="58.6,111.7 225.8,-87.4 215.1,-95.9" fill="#ffc600"/>
<polygon points="58.6,111.7 216.9,-94.5 205.9,-102.5" fill="#ffd600"/>
<polygon points="58.6,111.7 207.8,-101.3 196.4,-108.8" fill="#ffe600"/>
<polygon points="58.6,111.7 198.3,-107.6 186.7,-114.6" fill="#fff700"/>
<polygon points="58.6,111.7 188.6,-113.4 176.7,-119.9" fill="#f5ff00"/>
<polygon points="58.6,111.7 178.7,-118.9 166.5,-124.9" fill="#e1ff00"/>
<polygon points="58.6,111.7 168.5,-123.9 156.0,-129.3" fill="#cdff00"/>
<polygon points="58.6,111.7 158.1,-128.5 145.4,-133.4" fill="#bbff00"/>
<polygon points="58.6,111.7 147.6,-132.6 134.7,-136.9" fill="#a9ff00"/>
<polygon points="58.6,111.7 136.8,-136.2 123.7,-140.0" fill="#98ff00"/>
<polygon points="58.6,111.7 125.9,-139.4 112.7,-142.6" fill="#88ff00"/>
<polygon points="58.6,111.7 114.9,-142.1 101.5,-144.7" fill="#78ff00"/>
<polygon points="58.6,111.7 103.8,-144.3 90.3,-146.3" fill="#6aff00"/>
<polygon points="58.6,111.7 92.6,-146.0 79.0,-147.5" fill="#5cff00"/>
<polygon points="58.6,111.7 81.3,-147.3 67.7,-148.1" fill="#4fff00"/>
<polygon points="58.6,111.7 70.0,-148.0 56.4,-148.3" fill="#43ff00"/>
<polygon points="58.6,111.7 58.6,-148.3 45.0,-147.9" fill="#38ff00"/>
<polygon points="58.6,111.7 47.3,-148.0 33.7,-147.1" fill="#2eff00"/>
<polygon points="58.6,111.7 36.0,-147.3 22.4,-145.7" fill="#25ff00"/>
<polygon points="58.6,111.7 24.7,-146.0 11.3,-143.9" fill="#1cff00"/>
<polygon points="58.6,111.7 13.5,-144.3 0.1,-141.6" fill="#15ff00"/>
<polygon points="58.6,111.7 2.4,-142.1 -10.8,-138.8" fill="#0fff00"/>
<polygon points="58.6,111.7 -8.7,-139.4 -21.7,-135.5" fill="#09ff00"/>
<polygon points="58.6,111.7 -19.5,-136.2 -32.4,-131.8" fill="#05ff00"/>
<polygon points="58.6,111.7 -30.3,-132.6 -43.0,-127.6" fill="#02ff00"/>
<polygon points="58.6,111.7 -40.9,-128.5 -53.3,-122.9" fill="#00ff00"/>
<polygon points="58.6,111.7 -51.2,-123.9 -63.4,-117.8" fill="#00ff00"/>
<polygon points="58.6,111.7 -61.4,-118.9 -73.3,-112.3" fill="#00ff02"/>
<polygon points="58.6,111.7 -71.4,-113.4 -83.0,-106.3" fill="#00ff04"/>
<polygon points="58.6,111.7 -81.1,-107.6 -92.3,-99.9" fill="#00ff07"/>
<polygon points="58.6,111.7 -90.5,-101.3 -101.4,-93.2" fill="#00ff0b"/>
<polygon points="58.6,111.7 -99.6,-94.5 -110.2,-86.0" fill="#00ff10"/>
<polygon points="58.6,111.7 -108.5,-87.4 -118.7,-78.4" fill="#00ff15"/>
<polygon points="58.6,111.7 -117.0,-80.0 -126.8,-70.5" fill="#00ff1b"/>
<polygon points="58.6,111.7 -125.2,-72.1 -134.6,-62.2" fill="#00ff22"/>
<polygon points="58.6,111.7 -133.1,-63.9 -142.0,-53.7" fill="#00ff2a"/>
<polygon points="58.6,111.7 -140.5,-55.4 -149.0,-44.7" fill="#00ff32"/>
<polygon points="58.6,111.7 -147.6,-46.6 -155.6,-35.5" fill="#00ff3b"/>
<polygon points="58.6,111.7 -154.3,-37.4 -161.9,-26.1" fill="#00ff44"/>
<polygon points="58.6,111.7 -160.6,-28.0 -167.7,-16.3" fill="#00ff4e"/>
<polygon points="58.6,111.7 -166.5,-18.3 -173.0,-6.3" fill="#00ff59"/>
<polygon points="58.6,111.7 -172.0,-8.3 -178.0,3.9" fill="#00ff65"/>
<polygon points="58.6,111.7 -177.0,1.8 -182.4,14.3" fill="#00ff70"/>
<polygon points="58.6,111.7 -181.6,12.2 -186.5,24.9" fill="#00ff7d"/>
<polygon points="58.6,111.7 -185.7,22.8 -190.0,35.7" fill="#00ff8a"/>
<polygon points="58.6,111.7 -189.3,33.5 -193.1,46.6" fill="#00ff98"/>
<polygon points="58.6,111.7 -192.5,44.4 -195.7,57.7" fill="#00ffa6"/>
<polygon points="58.6,111.7 -195.2,55.5 -197.8,68.8" fill="#00ffb5"/>
<polygon points="58.6,111.7 -197.4,66.6 -199.4,80.0" fill="#00ffc5"/>
<polygon points="58.6,111.7 -199.1,77.8 -200.6,91.3" fill="#00ffd5"/>
<polygon points="58.6,111.7 -200.4,89.1 -201.2,102.7" fill="#00ffe5"/>
<polygon points="58.6,111.7 -201.1,100.4 -201.4,114.0" fill="#00fff6"/>
<polygon points="58.6,111.7 -201.4,111.7 -201.0,125.3" fill="#00f9ff"/>
<polygon points="58.6,111.7 -201.1,123.1 -200.2,136.6" fill="#00ecff"/>
<polygon points="58.6,111.7 -200.4,134.4 -198.8,147.9" fill="#00e0ff"/>
<polygon points="58.6,111.7 -199.1,145.7 -197.0,159.1" fill="#00d4ff"/>
<polygon points="58.6,111.7 -197.4,156.9 -194.7,170.2" fill="#00c8ff"/>
<polygon points="58.6,111.7 -195.2,168.0 -191.9,181.2" fill="#00bcff"/>
<polygon points="58.6,111.7 -192.5,179.0 -188.6,192.1" fill="#00b1ff"/>
<polygon points="58.6,111.7 -189.3,189.9 -184.9,202.8" fill="#00a5ff"/>
<polygon points="58.6,111.7 -185.7,200.7 -180.7,213.3" fill="#009aff"/>
<polygon points="58.6,111.7 -181.6,211.2 -176.0,223.7" fill="#008fff"/>
<polygon points="58.6,111.7 -177.0,221.6 -170.9,233.8" fill="#0084ff"/>
<polygon points="58.6,111.7 -172.0,231.8 -165.4,243.7" fill="#0079ff"/>
<polygon points="58.6,111.7 -166.5,241.7 -159.4,253.3" fill="#006eff"/>
<polygon points="58.6,111.7 -160.6,251.4 -153.0,262.7" fill="#0064ff"/>
<polygon points="58.6,111.7 -154.3,260.9 -146.2,271.8" fill="#005aff"/>
<polygon points="58.6,111.7 -147.6,270.0 -139.1,280.6" fill="#0050ff"/>
<polygon points="58.6,111.7 -140.5,278.9 -131.5,289.0" fill="#0046ff"/>
<polygon points="58.6,111.7 -133.1,287.4 -123.6,297.2" fill="#003dff"/>
<polygon points="58.6,111.7 -125.2,295.6 -115.3,304.9" fill="#0033ff"/>
<polygon points="58.6,111.7 -117.0,303.4 -106.7,312.3" fill="#002aff"/>
<polygon points="58.6,111.7 -108.5,310.9 -97.8,319.4" fill="#0022ff"/>
<polygon points="58.6,111.7 -99.6,318.0 -88.6,326.0" fill="#001aff"/>
<polygon points="58.6,111.7 -90.5,324.7 -79.1,332.2" fill="#0012ff"/>
<polygon points="58.6,111.7 -81.1,331.0 -69.4,338.0" fill="#000bff"/>
<polygon points="58.6,111.7 -71.4,336.9 -59.4,343.4" fill="#0005ff"/>
<polygon points="58.6,111.7 -61.4,342.3 -49.2,348.3" fill="#0000ff"/>
<polygon points="58.6,111.7 -51.2,347.4 -38.8,352.8" fill="#0200ff"/>
<polygon points="58.6,111.7 -40.9,351.9 -28.2,356.8" fill="#0700ff"/>
<polygon points="58.6,111.7 -30.3,356.0 -17.4,360.4" fill="#0e00ff"/>
<polygon points="58.6,111.7 -19.5,359.7 -6.5,363.4" fill="#1800ff"/>
<polygon points="58.6,111.7 -8.7,362.9 4.6,366.0" fill="#2500ff"/>
<polygon points="58.6,111.7 2.4,365.6 15.7,368.2" fill="#3300ff"/>
<polygon points="58.6,111.7 13.5,367.8 26.9,369.8" fill="#4400ff"/>
<polygon points="58.6,111.7 24.7,369.5 38.2,370.9" fill="#5700ff"/>
<polygon points="58.6,111.7 36.0,370.7 49.6,371.6" fill="#6b00ff"/>
<polygon points="58.6,111.7 47.3,371.5 60.9,371.7" fill="#8200ff"/>
<polygon points="58.6,111.7 58.6,371.7 72.2,371.4" fill="#9a00ff"/>
<polygon points="58.6,111.7 70.0,371.5 83.6,370.5" fill="#b500ff"/>
<polygon points="58.6,111.7 81.3,370.7 94.8,369.2" fill="#d100ff"/>
<polygon points="58.6,111.7 92.6,369.5 106.0,367.4" fill="#ef00ff"/>
<polygon points="58.6,111.7 103.8,367.8 117.1,365.1" fill="#ff00f9"/>
<polygon points="58.6,111.7 114.9,365.6 128.1,362.3" fill="#ff00ee"/>
<polygon points="58.6,111.7 125.9,362.9 139.0,359.0" fill="#ff00e3"/>
<polygon points="58.6,111.7 136.8,359.7 149.7,355.3" fill="#ff00d8"/>
<polygon points="58.6,111.7 147.6,356.0 160.2,351.1" fill="#ff00cd"/>
<polygon points="58.6,111.7 158.1,351.9 170.6,346.4" fill="#ff00c2"/>
<polygon points="58.6,111.7 168.5,347.4 180.7,341.3" fill="#ff00b8"/>
<polygon points="58.6,111.7 178.7,342.3 190.6,335.8" fill="#ff00ad"/>
<polygon points="58.6,111.7 188.6,336.9 200.2,329.8" fill="#ff00a3"/>
<polygon points="58.6,111.7 198.3,331.0 209.6,323.4" fill="#ff0099"/>
<polygon points="58.6,111.7 207.8,324.7 218.7,316.6" fill="#ff008f"/>
<polygon points="58.6,111.7 216.9,318.0 227.5,309.4" fill="#ff0085"/>
<polygon points="58.6,111.7 225.8,310.9 236.0,301.9" fill="#ff007b"/>
<polygon points="58.6,111.7 234.3,303.4 244.1,294.0" fill="#ff0072"/>
<polygon points="58.6,111.7 242.5,295.6 251.9,285.7" fill="#ff0068"/>
<polygon points="58.6,111.7 250.3,287.4 259.3,277.1" fill="#ff005f"/>
<polygon points="58.6,111.7 257.8,278.9 266.3,268.2" fill="#ff0056"/>
<polygon points="58.6,111.7 264.9,270.0 272.9,259.0" fill="#ff004e"/>
<polygon points="58.6,111.7 271.6,260.9 279.1,249.5" fill="#ff0045"/>
<polygon points="58.6,111.7 277.9,251.4 284.9,239.8" fill="#ff003d"/>
<polygon points="58.6,111.7 283.8,241.7 290.3,229.8" fill="#ff0035"/>
<polygon points="58.6,111.7 289.3,231.8 295.2,219.5" fill="#ff002d"/>
<polygon points="58.6,111.7 294.3,221.6 299.7,209.1" fill="#ff0026"/>
<polygon points="58.6,111.7 298.8,211.2 303.7,198.5" fill="#ff001e"/>
<polygon points="58.6,111.7 303.0,200.7 307.3,187.7" fill="#ff0018"/>
<polygon points="58.6,111.7 306.6,189.9 310.4,176.8" fill="#ff0011"/>
<polygon points="58.6,111.7 309.8,179.0 313.0,165.8" fill="#ff000c"/>
<polygon points="58.6,111.7 312.5,168.0 315.1,154.6" fill="#ff0006"/>
<polygon points="58.6,111.7 314.7,156.9 316.7,143.4" fill="#ff0002"/>
<polygon points="58.6,111.7 316.4,145.7 317.8,132.1" fill="#ff0000"/>
<polygon points="58.6,111.7 317.6,134.4 318.5,120.8" fill="#ff0100"/>
<polygon points="58.6,111.7 318.4,123.1 318.6,109.5" fill="#ff0300"/>
<circle cx="58.6" cy="111.7" r="34" fill="url(#wg)"/>
</g>
<path d="M47.7 127.9 L52.5 121.9 L57.3 116.5 L62.1 111.5 L67.9 106.2 L73.8 101.6 L80.4 97.6 L86.7 94.6 L92.9 93.6 L97.7 93.4 L104.5 94.0 L111.2 96.1 L117.9 99.3 L122.7 102.6 L127.5 106.9" fill="none" stroke="#000" stroke-width="1"/>
<circle cx="86.7" cy="94.6" r="3" fill="none" stroke="#000" stroke-width="1"/>
<rect x="0.5" y="0.5" width="154" height="172" fill="none" stroke="#000" stroke-width="1" shape-rendering="crispEdges"/>
</svg>
<span class="ar" style="left:75px;top:190px;width:20px;text-align:right;font-size:10.8px;line-height:14px;transform:scaleY(1.2);transform-origin:50% 50%">0.1</span>
<span class="ar" style="left:75px;top:171px;width:20px;text-align:right;font-size:10.8px;line-height:14px;transform:scaleY(1.2);transform-origin:50% 50%">0.2</span>
<span class="ar" style="left:75px;top:152px;width:20px;text-align:right;font-size:10.8px;line-height:14px;transform:scaleY(1.2);transform-origin:50% 50%">0.3</span>
<span class="ar" style="left:75px;top:133px;width:20px;text-align:right;font-size:10.8px;line-height:14px;transform:scaleY(1.2);transform-origin:50% 50%">0.4</span>
<span class="ar" style="left:75px;top:114px;width:20px;text-align:right;font-size:10.8px;line-height:14px;transform:scaleY(1.2);transform-origin:50% 50%">0.5</span>
<span class="ar" style="left:75px;top:95px;width:20px;text-align:right;font-size:10.8px;line-height:14px;transform:scaleY(1.2);transform-origin:50% 50%">0.6</span>
<span class="ar" style="left:75px;top:76px;width:20px;text-align:right;font-size:10.8px;line-height:14px;transform:scaleY(1.2);transform-origin:50% 50%">0.7</span>
<span class="ar" style="left:75px;top:56px;width:20px;text-align:right;font-size:10.8px;line-height:14px;transform:scaleY(1.2);transform-origin:50% 50%">0.8</span>
<span class="ar" style="left:75px;top:37px;width:20px;text-align:right;font-size:10.8px;line-height:14px;transform:scaleY(1.2);transform-origin:50% 50%">0.9</span>
<span class="ar" style="left:89px;top:210px;font-size:10.8px;line-height:14px;transform:scaleY(1.2);transform-origin:50% 50%">0</span>
<span class="ar" style="left:87px;top:215px;width:24px;text-align:center;font-size:10.8px;line-height:14px;transform:scaleY(1.2);transform-origin:50% 50%">0</span>
<span class="ar" style="left:106px;top:215px;width:24px;text-align:center;font-size:10.8px;line-height:14px;transform:scaleY(1.2);transform-origin:50% 50%">0.1</span>
<span class="ar" style="left:126px;top:215px;width:24px;text-align:center;font-size:10.8px;line-height:14px;transform:scaleY(1.2);transform-origin:50% 50%">0.2</span>
<span class="ar" style="left:145px;top:215px;width:24px;text-align:center;font-size:10.8px;line-height:14px;transform:scaleY(1.2);transform-origin:50% 50%">0.3</span>
<span class="ar" style="left:164px;top:215px;width:24px;text-align:center;font-size:10.8px;line-height:14px;transform:scaleY(1.2);transform-origin:50% 50%">0.4</span>
<span class="ar" style="left:183px;top:215px;width:24px;text-align:center;font-size:10.8px;line-height:14px;transform:scaleY(1.2);transform-origin:50% 50%">0.5</span>
<span class="ar" style="left:202px;top:215px;width:24px;text-align:center;font-size:10.8px;line-height:14px;transform:scaleY(1.2);transform-origin:50% 50%">0.6</span>
<span class="ar" style="left:222px;top:215px;width:24px;text-align:center;font-size:10.8px;line-height:14px;transform:scaleY(1.2);transform-origin:50% 50%">0.7</span>
<span class="ar" style="left:241px;top:215px;width:24px;text-align:center;font-size:10.8px;line-height:14px;transform:scaleY(1.2);transform-origin:50% 50%">0.8</span>
<span class="ar" style="left:64px;top:38px;font-size:12px;line-height:14px">y</span>
<span class="ar" style="left:268px;top:215px;font-size:12px;line-height:14px">x</span>
<span class="ar" style="left:146px;top:111px;font-size:12.2px;line-height:14px;color:#0000e0;transform:scaleY(1.08)">0.4476,0.4074</span>
<span class="ar" style="left:99px;top:233px;font-size:13px;line-height:14px">Created by AX_CIE_XYZ Ver 1.00</span>
<span class="ar" style="left:99px;top:249px;font-size:13px;line-height:14px">Copyright 2009 EVERFINE</span>
</div>
 <!-- h scrollbar -->
 <div style="left:161px;top:616px;width:1080px;height:16px;background:#f0f0f0">
  <svg style="left:5px;top:4px;width:5px;height:7px" viewBox="0 0 5 7"><path d="M4.500 0 L0.500 3.500 L4.500 7 z" fill="#505050"/></svg>
  <div style="left:17px;top:0;width:1016px;height:16px;border:1px solid #979797;border-radius:2px;background:linear-gradient(#f5f5f5 0,#e9e9eb 45%,#d8d9dc 50%,#cfd0d4 100%)"><i style="left:505px;top:4px;width:1px;height:6px;background:#5a5a5a"></i><i style="left:507px;top:4px;width:1px;height:6px;background:#5a5a5a"></i><i style="left:509px;top:4px;width:1px;height:6px;background:#5a5a5a"></i></div>
  <svg style="left:1069px;top:4px;width:5px;height:7px" viewBox="0 0 5 7"><path d="M0.500 0 L4.500 3.500 L0.500 7 z" fill="#505050"/></svg>
 </div>
</div>
</div>
<!-- bottom data table -->
<div style="left:158px;top:637px;width:1085px;height:218px;border-left:1px solid #a0a0a0;border-top:1px solid #a0a0a0"></div>
<div id="tbl" style="left:159px;top:638px;width:1084px;height:217px;background:#fff;border-top:1px solid #696969;border-left:1px solid #696969;border-right:2px solid #f8f8f8;border-bottom:2px solid #fff;overflow:hidden">
 <div style="left:0;top:0;width:1082px;height:23px;background:linear-gradient(#fff 0,#fff 40%,#f3f4f6 45%,#f3f4f6 100%);border-bottom:1px solid #d5d5d5"></div>
 <i class="vl" style="left:60px;top:0;height:22px;background:#e2e3ea"></i>
 <i class="vl" style="left:180px;top:0;height:22px;background:#e2e3ea"></i>
 <i class="vl" style="left:300px;top:0;height:22px;background:#e2e3ea"></i>
 <span class="ui" style="left:6.2px;top:4px;transform:scaleX(1.050);transform-origin:0 0">Serial</span>
 <span class="ui" style="left:67px;top:4px;transform:scaleX(1.013);transform-origin:0 0">WaveLength(nm)</span>
 <span class="ui" style="left:186px;top:4px">Relative Flux</span>
 <div style="left:0;top:24px;width:1082px;height:194px;background-size:1082px 21px;background-image:linear-gradient(#fff 0,#fff 20px,#f0f0f0 20px,#f0f0f0 21px)"></div>
 <i class="vl" style="left:61px;top:23px;height:195px;background:#f0f0f0"></i>
 <i class="vl" style="left:181px;top:23px;height:195px;background:#f0f0f0"></i>
 <i class="vl" style="left:301px;top:23px;height:195px;background:#f0f0f0"></i>
</div>
<!-- bottom tabs -->
<div style="left:231px;top:857px;width:1012px;height:1px;background:#000"></div>
<div class="tab" style="left:160px;top:856px;width:71px;height:22px;border-top:0;border-right:2px solid #a0a0a0;box-shadow:none"><span class="ui" style="left:6.9px;top:5px;transform:scaleX(1.030);transform-origin:0 0">Test Data</span></div>
<div class="tab" style="left:231px;top:857px;width:116px;height:21px;border-left-width:2px"><span class="ui" style="left:8.2px;top:3px;transform:scaleX(1.073);transform-origin:0 0">Test Information</span></div>
<!-- main/left bottom edge -->
<div style="left:158px;top:855px;width:1px;height:29px;background:#a0a0a0"></div><div style="left:159px;top:855px;width:1px;height:29px;background:#696969"></div>
<!-- status bar -->
<div class="hl" style="left:0;top:884px;width:1439px;background:#b0b0b0"></div>
<div class="hl" style="left:0;top:885px;width:1439px;background:#fff"></div>
<div id="status" style="left:0;top:886px;width:1439px;height:20px;background:#f0eded;border-top:1px solid #c8c8c8;border-bottom:1px solid #1c2530">
 <span class="ui" style="left:1.5px;top:2px;transform:scaleX(1.014);transform-origin:0 0">Ready</span>
 <i class="vl" style="left:1343px;top:2px;height:16px;background:#d0d0d0"></i>
 <span class="ui" style="left:1347.4px;top:2px;transform:scaleX(1.105);transform-origin:0 0">Number</span>
 <i class="vl" style="left:1399px;top:2px;height:16px;background:#d0d0d0"></i>
</div>
<!-- right docking panel: Test Control -->
<div id="dock" style="left:1247px;top:155px;width:192px;height:730px;background:#f0f0f0">
 <i style="left:1px;top:1px;width:174px;height:3px;border-top:1px solid #fff;border-left:1px solid #fff;border-bottom:1px solid #a0a0a0;border-right:1px solid #a0a0a0"></i>
 <i style="left:1px;top:4px;width:174px;height:2px;border-top:1px solid #fff;border-left:1px solid #fff;border-bottom:1px solid #a0a0a0;border-right:1px solid #a0a0a0"></i>
 <svg style="left:181px;top:1px;width:7px;height:6px" viewBox="0 0 7 6"><path d="M1 0.500 L6 5.500 M6 0.500 L1 5.500" stroke="#000" stroke-width="1.500"/></svg>
 <!-- pane -->
 <div style="left:2px;top:34px;width:186px;height:690px;border-left:1px solid #fff;border-top:1px solid #fff;border-right:1px solid #000;border-bottom:1px solid #000;box-shadow:1px 1px 0 #fff,inset -1px -1px 0 #fff"></div>
 <div style="left:2px;top:11px;width:82px;height:24px;background:#f0f0f0;border-left:1px solid #fff;border-top:1px solid #fff;border-right:2px solid #000;border-radius:2px 2px 0 0"></div>
 <span class="ss" style="left:6px;top:15px">Test Control</span>
</div>
<div id="dc" style="left:0;top:0;width:1439px;height:906px;pointer-events:none">
 <span class="ss" style="left:1268px;top:208px">Gain:</span>
 <div class="btn" style="left:1317px;top:205px;width:90px;height:20px"><span class="ss" style="left:3px;top:3px;text-align:left">5V</span><svg style="left:77px;top:8px;width:7px;height:4px" viewBox="0 0 7 4"><path d="M0 0 h7 l-3.500 4 z" fill="#000"/></svg></div>
 <div class="gb" style="left:1259px;top:247px;width:158px;height:50px"></div>
 <span class="ss gl" style="left:1265px;top:240px">Max Voltage(2V~1<em class="z">0</em>V)</span>
 <div class="ed" style="left:1274px;top:266px;width:66px;height:21px"><span class="ss" style="left:1px;top:1.500px">5</span></div>
 <div class="btn" style="left:1360px;top:266px;width:46px;height:19px"><span class="ss" style="top:2px">Set</span></div>
 <div class="gb" style="left:1260px;top:310px;width:158px;height:172px"></div>
 <span class="ss gl" style="left:1267px;top:303px">TMP Controller</span>
 <i class="cb" style="left:1274px;top:321px"></i>
 <span class="ss" style="left:1290px;top:321px">Continuous</span>
 <div class="lcd" style="left:1272px;top:341px;width:133px;height:52px"><span class="seg" style="left:53.0px;top:-1.2px;font-size:55.5px;transform:scale(0.716,1)"><em style="width:34.92px">0</em><u style="font-size:28.0px;left:-6.1px;transform:scaleX(1.57);transform-origin:0 0">.</u><em style="width:34.92px">0</em><em style="width:34.92px">0</em></span></div>
 <span class="ss" style="left:1263px;top:400px">Settings(5Deg~9<em class="z">0</em>Deg):</span>
 <div class="ed" style="left:1272px;top:422px;width:77px;height:21px"><span class="ss" style="left:1px;top:1.500px">25</span></div>
 <div class="btn" style="left:1360px;top:420px;width:46px;height:19px"><span class="ss" style="top:2px">Set</span></div>
 <div class="btn" style="left:1276px;top:453px;width:60px;height:19px"><span class="ss" style="top:2px">Start</span></div>
 <div class="btn dis" style="left:1341px;top:453px;width:60px;height:19px"><span class="ss" style="top:2px">Stop</span></div>
 <div class="gb" style="left:1259px;top:496px;width:158px;height:103px"></div>
 <span class="ss gl" style="left:1266px;top:489px">Test Box TMP</span>
 <i class="cb" style="left:1265px;top:517px"></i>
 <span class="ss" style="left:1281px;top:517px">Temperature(Deg):</span>
 <div class="lcd" style="left:1269px;top:538px;width:133px;height:51px"><span class="seg" style="left:53.0px;top:-1.0px;font-size:53.7px;transform:scale(0.740,1)"><em style="width:33.78px">0</em><u style="font-size:28.0px;left:-5.9px;transform:scaleX(1.52);transform-origin:0 0">.</u><em style="width:33.78px">0</em><em style="width:33.78px">0</em></span></div>
</div>
</div>
</body>
</html>
